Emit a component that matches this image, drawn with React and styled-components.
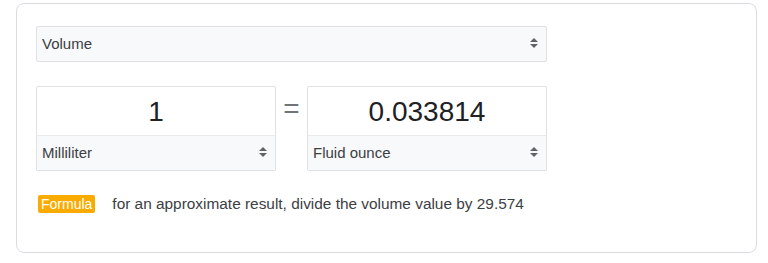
import React from 'react';
import styled, { createGlobalStyle } from 'styled-components';

const GlobalStyle = createGlobalStyle`
  body {
    margin: 0;
    padding: 3px 11px 0 16px;
    background: #fff;
    font-family: 'Liberation Sans', Arial, sans-serif;
  }
`;

const Card = styled.div`
  width: 741px;
  height: 250px;
  box-sizing: border-box;
  border: 1px solid #dadce0;
  border-radius: 8px;
  padding: 22px 0 0 19px;
`;

const SelectBox = styled.div`
  display: flex;
  align-items: center;
  justify-content: space-between;
  box-sizing: border-box;
  width: ${(p) => p.width}px;
  height: 36px;
  padding: 0 8px 2px 5px;
  background: #f8f9fa;
  border: 1px solid #dfe1e5;
  border-radius: ${(p) => (p.attached ? '0 0 2px 2px' : '2px')};
  ${(p) => p.attached && 'border-top-color: #e8eaed;'}
  color: #3c4043;
  font-size: 15px;
  cursor: pointer;
`;

const Arrows = () => (
  <svg width="8" height="12" viewBox="0 0 8 12">
    <path d="M0 5 L4 1 L8 5 Z" fill="#5f6368" />
    <path d="M0 7 L4 11 L8 7 Z" fill="#5f6368" />
  </svg>
);

const Row = styled.div`
  display: flex;
  align-items: flex-start;
  margin-top: 24px;
`;

const Unit = styled.div`
  display: flex;
  flex-direction: column;
  width: 240px;
`;

const Value = styled.div`
  box-sizing: border-box;
  height: 49px;
  border: 1px solid #dfe1e5;
  border-bottom: none;
  border-radius: 2px 2px 0 0;
  display: flex;
  align-items: center;
  justify-content: center;
  font-size: 28px;
  color: #202124;
  padding-top: 1px;
`;

const Equals = styled.div`
  width: 31px;
  height: 49px;
  display: flex;
  align-items: center;
  justify-content: center;
  color: #70757a;
  font-size: 28px;
  padding-bottom: 3px;
  box-sizing: border-box;
`;

const FormulaRow = styled.div`
  display: flex;
  align-items: center;
  margin-top: 24px;
  padding-left: 2px;
  color: #3c4043;
  font-size: 15.4px;
`;

const Badge = styled.span`
  background: #f9ab00;
  color: #fff;
  font-size: 14px;
  line-height: 18px;
  padding: 0 3px;
  border-radius: 2px;
  margin-right: 17px;
`;

export default function App() {
  return (
    <>
      <GlobalStyle />
      <Card>
        <SelectBox width={511}>
          <span>Volume</span>
          <Arrows />
        </SelectBox>
        <Row>
          <Unit>
            <Value>1</Value>
            <SelectBox width={240} attached>
              <span>Milliliter</span>
              <Arrows />
            </SelectBox>
          </Unit>
          <Equals>=</Equals>
          <Unit>
            <Value>0.033814</Value>
            <SelectBox width={240} attached>
              <span>Fluid ounce</span>
              <Arrows />
            </SelectBox>
          </Unit>
        </Row>
        <FormulaRow>
          <Badge>Formula</Badge>
          <span>for an approximate result, divide the volume value by 29.574</span>
        </FormulaRow>
      </Card>
    </>
  );
}
